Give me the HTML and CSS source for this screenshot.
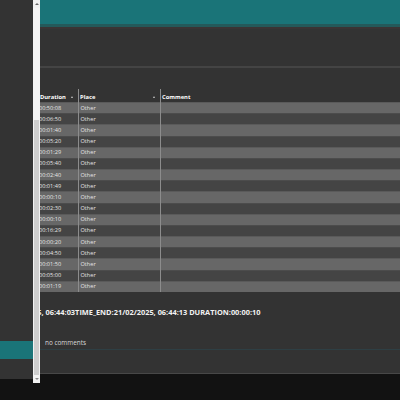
FILE: index.html
```html
<!DOCTYPE html>
<html>
<head>
<meta charset="utf-8">
<link rel="stylesheet" href="styles.css">
</head>
<body>
<div class="app">
  <aside class="left">
    <div class="left-fill"></div>
    <div class="left-tab"></div>
  </aside>
  <div class="scrollbar">
    <div class="sb-btn"><span class="tri-up"></span></div>
    <div class="sb-track"></div>
    <div class="sb-thumb"></div>
    <div class="sb-btn"><span class="tri-down"></span></div>
  </div>
  <main class="main">
    <div class="topbar"></div>
    <div class="toolbar"></div>
    <div class="table">
      <div class="thead">
        <div class="th c1"><span>Duration</span><i class="sort"></i></div>
        <div class="th c2"><span>Place</span><i class="sort"></i></div>
        <div class="th c3"><span>Comment</span></div>
      </div>
      <div class="row"><div class="td c1">00:50:08</div><div class="td c2">Other</div><div class="td c3"></div></div>
      <div class="row"><div class="td c1">00:06:50</div><div class="td c2">Other</div><div class="td c3"></div></div>
      <div class="row"><div class="td c1">00:01:40</div><div class="td c2">Other</div><div class="td c3"></div></div>
      <div class="row"><div class="td c1">00:05:20</div><div class="td c2">Other</div><div class="td c3"></div></div>
      <div class="row"><div class="td c1">00:01:29</div><div class="td c2">Other</div><div class="td c3"></div></div>
      <div class="row"><div class="td c1">00:05:40</div><div class="td c2">Other</div><div class="td c3"></div></div>
      <div class="row"><div class="td c1">00:02:40</div><div class="td c2">Other</div><div class="td c3"></div></div>
      <div class="row"><div class="td c1">00:01:49</div><div class="td c2">Other</div><div class="td c3"></div></div>
      <div class="row"><div class="td c1">00:00:10</div><div class="td c2">Other</div><div class="td c3"></div></div>
      <div class="row"><div class="td c1">00:02:30</div><div class="td c2">Other</div><div class="td c3"></div></div>
      <div class="row"><div class="td c1">00:00:10</div><div class="td c2">Other</div><div class="td c3"></div></div>
      <div class="row"><div class="td c1">00:16:29</div><div class="td c2">Other</div><div class="td c3"></div></div>
      <div class="row"><div class="td c1">00:00:20</div><div class="td c2">Other</div><div class="td c3"></div></div>
      <div class="row"><div class="td c1">00:04:50</div><div class="td c2">Other</div><div class="td c3"></div></div>
      <div class="row"><div class="td c1">00:01:50</div><div class="td c2">Other</div><div class="td c3"></div></div>
      <div class="row"><div class="td c1">00:05:00</div><div class="td c2">Other</div><div class="td c3"></div></div>
      <div class="row"><div class="td c1">00:01:19</div><div class="td c2">Other</div><div class="td c3"></div></div>
    </div>
    <div class="summary"><span class="summary-text">TIME_START:21/02/2025, 06:44:03TIME_END:21/02/2025, 06:44:13 DURATION:00:00:10</span></div>
    <div class="comments">no comments</div>
  </main>
</div>
</body>
</html>
```
FILE: styles.css
```css
html, body {
  margin: 0;
  padding: 0;
  background: #121212;
  width: 400px;
  height: 400px;
  overflow: hidden;
  font-family: "Open Sans", "Noto Sans", sans-serif;
}

.app {
  display: flex;
  align-items: flex-start;
  width: 400px;
}

.left {
  width: 33px;
  height: 379px;
  background: #333333;
  display: flex;
  flex-direction: column;
}

.left-fill {
  flex: 1;
}

.left-tab {
  height: 18px;
  background: #1a7478;
  margin-bottom: 20px;
}

.scrollbar {
  width: 7px;
  height: 383px;
  background: #f1f1f1;
  display: flex;
  flex-direction: column;
}

.sb-btn {
  height: 8px;
  display: flex;
  align-items: center;
  justify-content: center;
  background: #f1f1f1;
}

.tri-up {
  width: 0;
  height: 0;
  border-left: 2px solid transparent;
  border-right: 2px solid transparent;
  border-bottom: 2px solid #666;
}

.tri-down {
  width: 0;
  height: 0;
  border-left: 2px solid transparent;
  border-right: 2px solid transparent;
  border-top: 2px solid #888;
}

.sb-track {
  height: 112px;
  background: #f4f4f4;
}

.sb-thumb {
  flex: 1;
  background: #cdcdcd;
  margin: 0 1px;
}

.main {
  flex: 1;
  height: 373px;
  background: #333333;
  border-bottom: 1px solid #484848;
  overflow: hidden;
  display: flex;
  flex-direction: column;
}

.topbar {
  height: 24px;
  background: #1a7478;
  border-bottom: 3px solid #24595a;
  box-shadow: 0 2px 0 #3a3434;
}

.toolbar {
  height: 39px;
  border-bottom: 2px solid #444444;
}

.table {
  margin-top: 21px;
  color: #e6e6e6;
}

.thead {
  display: grid;
  grid-template-columns: 38px 82px 1fr;
  height: 13px;
  font-weight: 700;
  font-size: 5.8px;
  color: #ffffff;
}

.th {
  display: flex;
  align-items: center;
  justify-content: space-between;
  padding-top: 2px;
}

.th.c2, .th.c3 {
  border-left: 1px solid #8c8c8c;
  padding-left: 1px;
}

.sort {
  width: 0;
  height: 0;
  border-left: 1.5px solid transparent;
  border-right: 1.5px solid transparent;
  border-bottom: 2px solid #c8c8c8;
  margin-right: 5px;
}

.row {
  display: grid;
  grid-template-columns: 38px 82px 1fr;
  height: 11.18px;
  font-size: 5.6px;
  background: #444444;
  box-shadow: inset 0 1px 0 #4c4c4c;
}

.row:nth-child(even) {
  background: #676767;
  box-shadow: inset 0 1px 0 #5a5a5a;
}

.td {
  display: flex;
  align-items: center;
  white-space: nowrap;
}

.td.c1 {
  margin-left: -1px;
}

.td.c2, .td.c3 {
  border-left: 1px solid #8c8c8c;
  padding-left: 1.5px;
}

.summary {
  margin-top: 15px;
  height: 11px;
  overflow: hidden;
  white-space: nowrap;
  font-weight: 700;
  font-size: 7.4px;
  color: #f2f2f2;
}

.summary-text {
  display: inline-block;
  margin-left: -84px;
}

.comments {
  margin-top: 20px;
  padding-left: 5px;
  height: 11px;
  font-size: 6.4px;
  color: #d8d8d8;
  border-bottom: 1px solid #2e3f44;
}
```
